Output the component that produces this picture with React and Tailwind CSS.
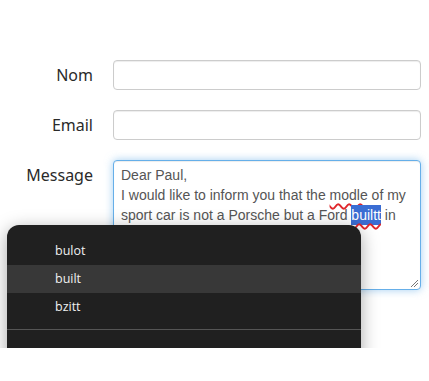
import React from 'react';

const suggestions = ['bulot', 'built', 'bzitt'];

function Field({ label, children }) {
    return (
        <>
            <label className="h-[30px] leading-[30px] text-right text-[16px] text-[#2a2a2a]" style={{ fontFamily: '"Noto Sans", sans-serif' }}>
                {label}
            </label>
            {children}
        </>
    );
}

export default function App() {
    return (
        <div className="relative h-[348px] overflow-hidden bg-white">
            {/* form */}
            <div className="grid grid-cols-[93px_1fr] gap-x-5 gap-y-5 pt-[60px] pr-2">
                <Field label="Nom">
                    <div className="h-[30px] rounded-[4px] border border-[#ccc] bg-white shadow-[inset_0_1px_1px_rgba(0,0,0,0.075)]" />
                </Field>
                <Field label="Email">
                    <div className="h-[30px] rounded-[4px] border border-[#ccc] bg-white shadow-[inset_0_1px_1px_rgba(0,0,0,0.075)]" />
                </Field>
                <Field label="Message">
                    <div
                        className="relative h-[130px] rounded-[4px] border border-[#66afe9] bg-white pt-[4px] pl-[7px] text-[14px] leading-[20px] text-[#555] shadow-[inset_0_1px_1px_rgba(0,0,0,0.075),0_0_8px_rgba(102,175,233,0.6)] whitespace-nowrap"
                        style={{ fontFamily: '"Liberation Sans", Arial, sans-serif' }}
                    >
                        <div>Dear Paul,</div>
                        <div>
                            I would like to inform you that the{' '}
                            <span className="underline decoration-wavy decoration-[#e0262b] decoration-[1.5px] underline-offset-[3px]">modle</span> of my
                        </div>
                        <div>
                            sport car is not a Porsche but a Ford{' '}
                            <span className="inline-block h-[20px] align-top bg-[#3a6dd3] text-white underline decoration-wavy decoration-[#e0262b] decoration-[1.5px] underline-offset-[3px]">builtt</span> in
                        </div>
                        <svg className="absolute right-[1px] bottom-[1px]" width="10" height="10" viewBox="0 0 10 10">
                            <path d="M9 2 L2 9 M9 5 L5 9" stroke="#777" strokeWidth="1" />
                        </svg>
                    </div>
                </Field>
            </div>

            {/* spell check context menu */}
            <div
                className="absolute left-[7px] top-[225px] w-[354px] h-[160px] rounded-[12px] bg-[#202020] pt-3 shadow-[0_4px_18px_rgba(0,0,0,0.35)]"
                style={{ fontFamily: '"Open Sans", "Noto Sans", sans-serif' }}
            >
                {suggestions.map((s, i) => (
                    <div
                        key={s}
                        className={`h-[28px] flex items-center pl-12 text-[12.5px] text-[#f0f0f0] ${i === 1 ? 'bg-[#383838]' : ''}`}
                    >
                        {s}
                    </div>
                ))}
                <div className="mt-2 h-px bg-[#555]" />
            </div>
        </div>
    );
}
